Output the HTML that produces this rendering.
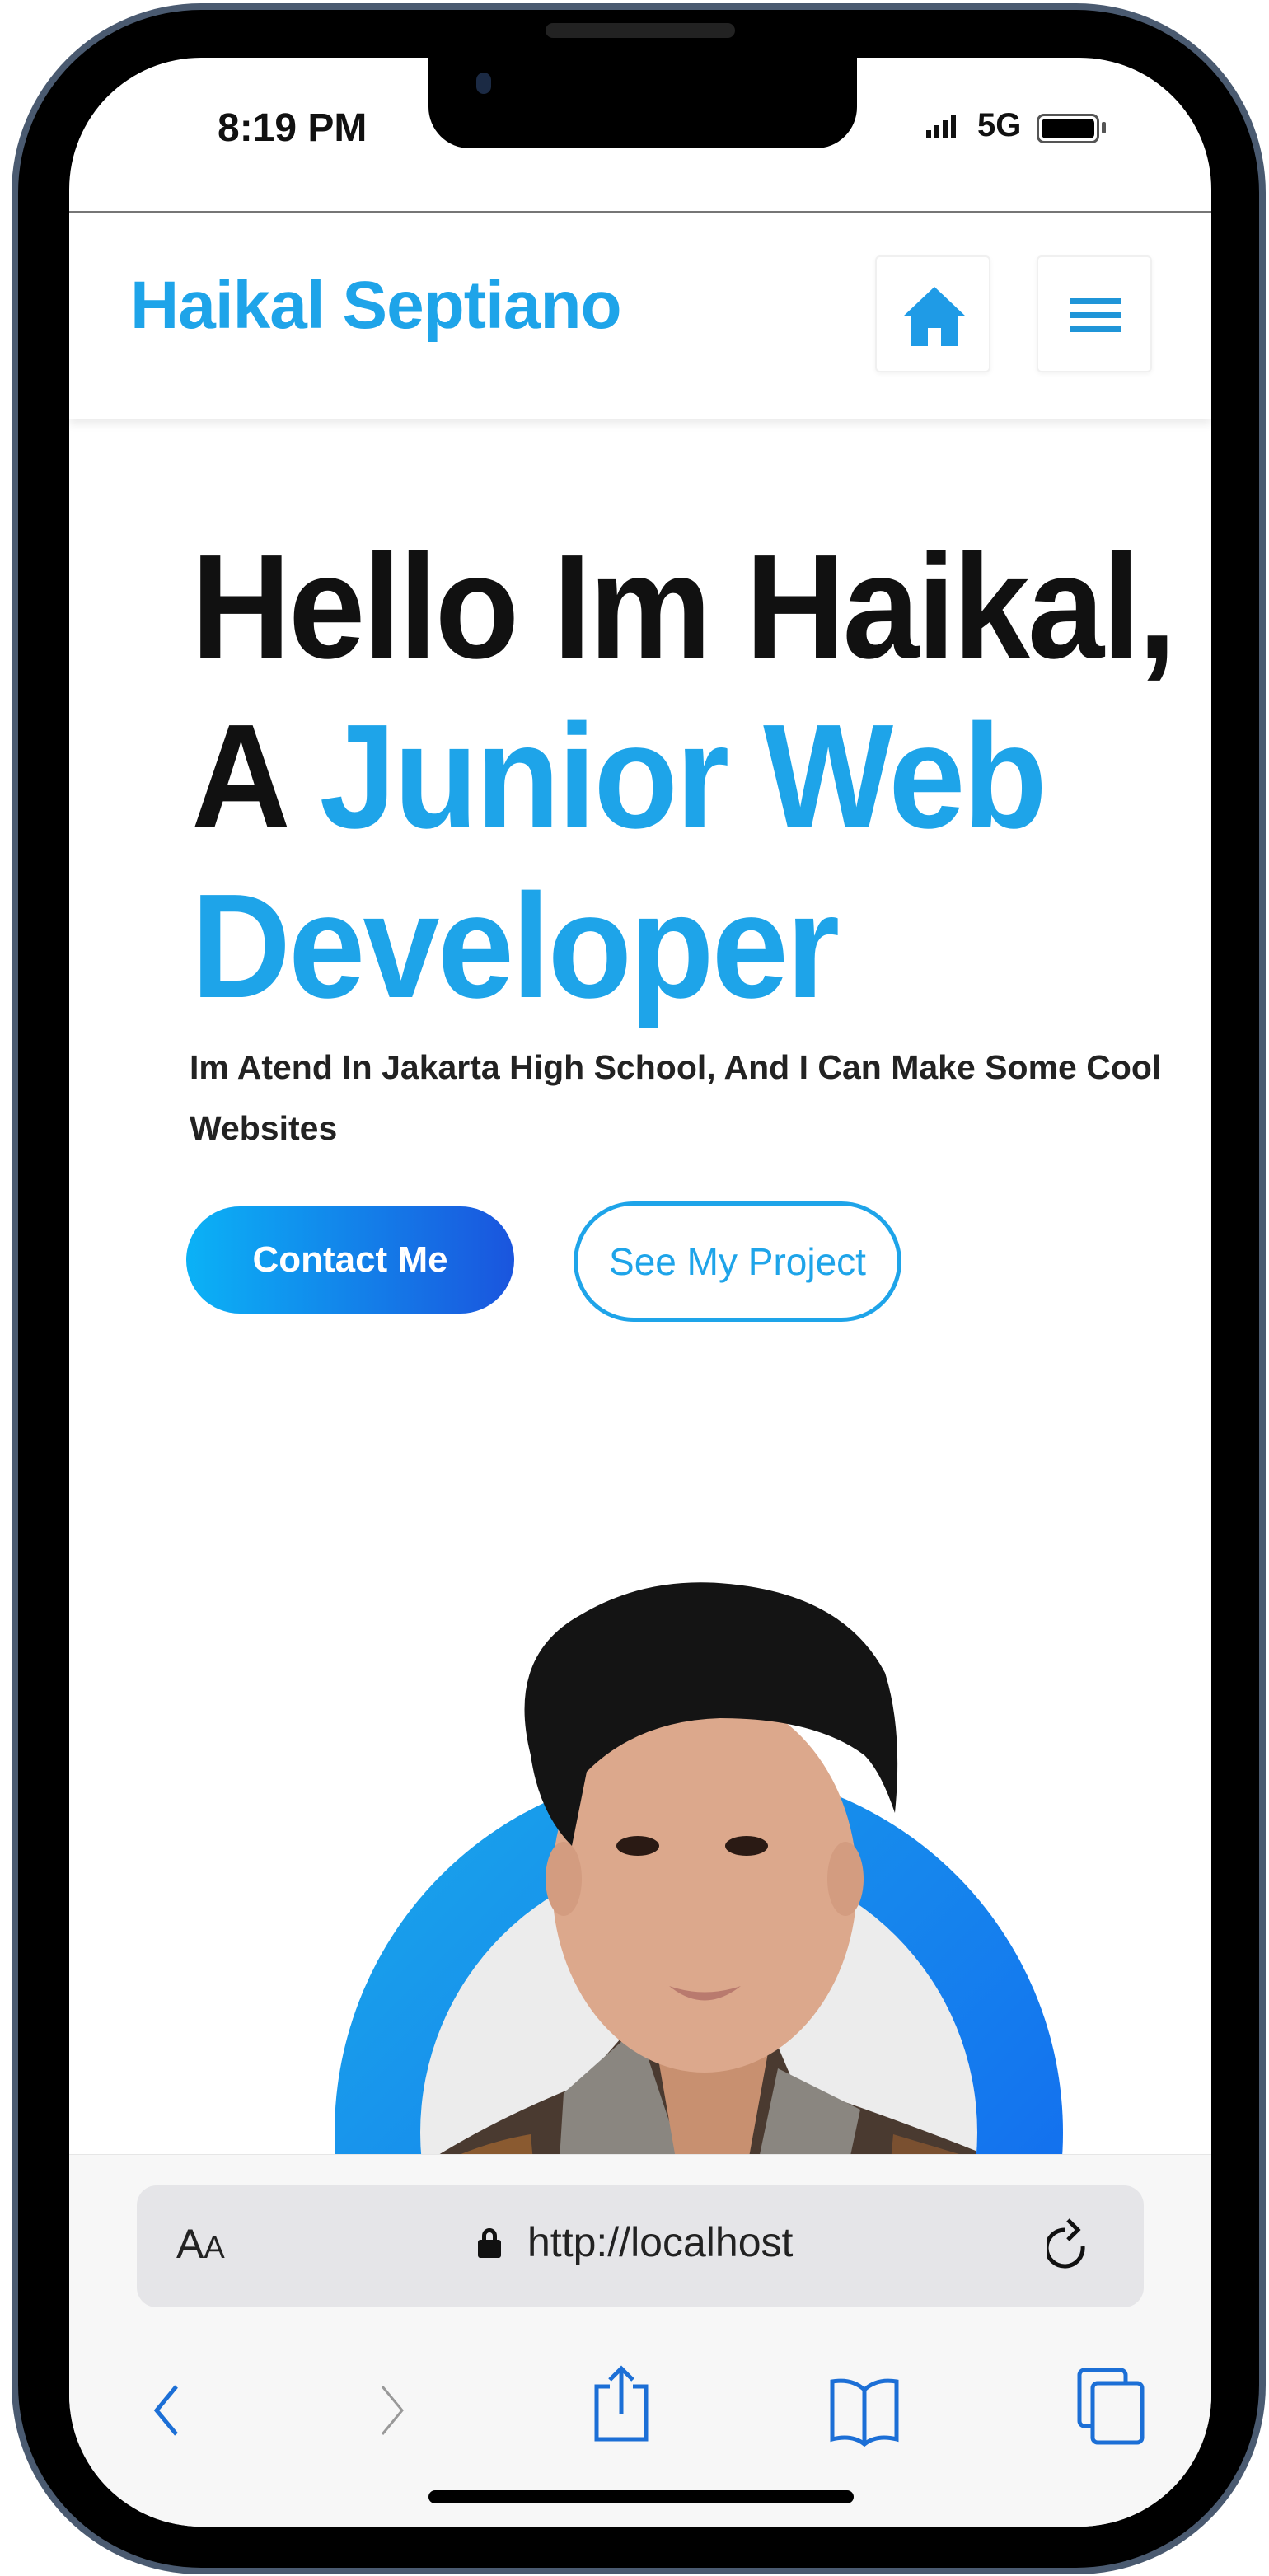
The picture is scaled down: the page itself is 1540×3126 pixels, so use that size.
<!DOCTYPE html>
<html><head><meta charset="utf-8"><style>
*{margin:0;padding:0;box-sizing:border-box}
body{width:1540px;height:3126px;background:#fff;position:relative;overflow:hidden;font-family:"Liberation Sans",sans-serif}
.a{position:absolute}
</style></head><body>
<div class="a" style="left:14px;top:4px;width:1522px;height:3120px;border-radius:230px;background:#4a5a70;"></div>
<div class="a" style="left:22px;top:12px;width:1506px;height:3104px;border-radius:222px;background:#000;"></div>
<div class="a" style="left:84px;top:70px;width:1386px;height:2996px;border-radius:160px;background:#fff;overflow:hidden;">
  <div class="a" style="left:0;top:186px;width:1386px;height:3px;background:#777"></div>
  <div class="a" style="left:0;top:189px;width:1386px;height:250px;background:#fff;box-shadow:0 6px 10px rgba(0,0,0,.08)"></div>
  <div class="a" style="left:74px;top:254px;font-size:82px;font-weight:bold;color:#1ea4e9;letter-spacing:-1px;white-space:nowrap">Haikal Septiano</div>
  <div class="a" style="left:978px;top:240px;width:140px;height:142px;border:2px solid #f0f0f0;border-radius:6px;box-shadow:0 2px 6px rgba(0,0,0,.05)">
    <svg class="a" style="left:28px;top:30px" width="84" height="84" viewBox="0 0 84 84"><path d="M42 6 L80 42 H70 V78 H50 V56 H34 V78 H14 V42 H4 Z" fill="#1f9be6"/></svg>
  </div>
  <div class="a" style="left:1174px;top:240px;width:140px;height:142px;border:2px solid #f0f0f0;border-radius:6px;box-shadow:0 2px 6px rgba(0,0,0,.05)">
    <div class="a" style="left:38px;top:50px;width:62px;height:7px;background:#1f95d8"></div>
    <div class="a" style="left:38px;top:67px;width:62px;height:7px;background:#1f95d8"></div>
    <div class="a" style="left:38px;top:84px;width:62px;height:7px;background:#1f95d8"></div>
  </div>
  <div class="a" style="left:148px;top:564px;font-size:180px;font-weight:bold;line-height:206px;color:#111;letter-spacing:-3px;white-space:nowrap;transform:scaleX(0.93);transform-origin:0 0">Hello Im Haikal,<br>A <span style="color:#1ea4e9">Junior Web</span><br><span style="color:#1ea4e9">Developer</span></div>
  <div class="a" style="left:146px;top:1188px;width:1260px;font-size:41px;line-height:74px;color:#222;font-weight:bold">Im Atend In Jakarta High School, And I Can Make Some Cool Websites</div>
  <div class="a" style="left:142px;top:1394px;width:398px;height:130px;border-radius:65px;background:linear-gradient(90deg,#0bb2f6,#1a55de);color:#fff;font-size:44px;font-weight:bold;text-align:center;line-height:130px">Contact Me</div>
  <div class="a" style="left:612px;top:1388px;width:398px;height:146px;border-radius:73px;border:5px solid #1ea4e9;color:#1ea4e9;font-size:46px;text-align:center;line-height:136px">See My Project</div>
  <svg class="a" style="left:0;top:1800px" width="1386" height="815" viewBox="0 1870 1386 815">
    <defs><linearGradient id="g" x1="0" y1="0" x2="1" y2="1"><stop offset="0" stop-color="#1aa8ea"/><stop offset="1" stop-color="#1160f0"/></linearGradient></defs>
    <circle cx="764" cy="2588" r="442" fill="url(#g)"/>
    <circle cx="764" cy="2588" r="338" fill="#ececec"/>
    <path d="M430 2700 L440 2620 Q520 2570 620 2530 L690 2450 L850 2460 L880 2530 Q1000 2570 1100 2610 L1110 2700 Z" fill="#4a3a30"/>
    <path d="M600 2540 L690 2460 L750 2640 L720 2700 L590 2700 Z" fill="#8a8680"/>
    <path d="M860 2510 L960 2560 L930 2700 L820 2700 Z" fill="#8a8680"/>
    <path d="M440 2630 Q500 2600 560 2590 L570 2700 L440 2700 Z" fill="#8a5a30"/>
    <path d="M1000 2590 L1100 2620 L1105 2700 L990 2700 Z" fill="#7a5030"/>
    <path d="M710 2470 L850 2480 L810 2700 L750 2700 Z" fill="#c89070"/>
    <ellipse cx="771" cy="2285" rx="185" ry="230" fill="#dca88c"/>
    <ellipse cx="600" cy="2280" rx="22" ry="45" fill="#d39c80"/>
    <ellipse cx="942" cy="2280" rx="22" ry="45" fill="#d39c80"/>
    <ellipse cx="690" cy="2240" rx="26" ry="12" fill="#2a1a14"/>
    <ellipse cx="822" cy="2240" rx="26" ry="12" fill="#2a1a14"/>
    <path d="M728 2410 Q771 2425 815 2410 Q771 2445 728 2410Z" fill="#b97a6e"/>
    <path d="M560 2130 Q530 2010 620 1960 Q700 1912 800 1922 Q940 1935 990 2030 Q1012 2100 1002 2200 Q985 2150 965 2130 Q905 2085 790 2085 Q690 2088 628 2150 L610 2240 Q570 2200 560 2130Z" fill="#141414"/>
  </svg>
  <div class="a" style="left:0;top:2544px;width:1386px;height:460px;background:#f7f7f7;border-top:1px solid #e6e6e6"></div>
  <div class="a" style="left:82px;top:2582px;width:1222px;height:148px;border-radius:24px;background:#e5e5e8"></div>
  <div class="a" style="left:130px;top:2624px;font-size:50px;color:#222">A<span style="font-size:38px">A</span></div>
  <div class="a" style="left:496px;top:2634px;width:28px;height:34px"><div style="position:absolute;left:5px;top:0;width:18px;height:20px;border:5px solid #111;border-radius:9px 9px 0 0"></div><div style="position:absolute;left:0;top:14px;width:28px;height:22px;background:#111;border-radius:3px"></div></div>
  <div class="a" style="left:556px;top:2622px;font-size:50px;color:#222">http://localhost</div>
  <svg class="a" style="left:1186px;top:2616px" width="60" height="80" viewBox="0 0 60 80"><path d="M22 20 A22 22 0 1 0 44 40" fill="none" stroke="#111" stroke-width="5"/><path d="M26 8 L38 20 L26 32" fill="none" stroke="#111" stroke-width="5"/></svg>
  <svg class="a" style="left:98px;top:2820px" width="40" height="70"><path d="M32 6 L8 35 L32 64" fill="none" stroke="#1c6fd6" stroke-width="5"/></svg>
  <svg class="a" style="left:372px;top:2820px" width="40" height="70"><path d="M8 6 L32 35 L8 64" fill="none" stroke="#999" stroke-width="3"/></svg>
  <svg class="a" style="left:632px;top:2800px" width="76" height="100"><path d="M24 26 H8 V90 H68 V26 H52" fill="none" stroke="#1c6fd6" stroke-width="5"/><path d="M38 4 V60 M24 18 L38 4 L52 18" fill="none" stroke="#1c6fd6" stroke-width="5"/></svg>
  <svg class="a" style="left:920px;top:2810px" width="90" height="90"><path d="M45 20 Q30 6 6 10 V80 Q30 74 45 86 Q60 74 84 80 V10 Q60 6 45 20 V86" fill="none" stroke="#1c6fd6" stroke-width="5"/></svg>
  <svg class="a" style="left:1220px;top:2800px" width="90" height="100"><rect x="6" y="6" width="56" height="68" rx="6" fill="none" stroke="#1c6fd6" stroke-width="5"/><rect x="22" y="22" width="60" height="72" rx="6" fill="#f7f7f7" stroke="#1c6fd6" stroke-width="5"/></svg>
  <div class="a" style="left:436px;top:2952px;width:516px;height:16px;border-radius:8px;background:#000"></div>
</div>
<div class="a" style="left:520px;top:60px;width:520px;height:120px;background:#000;border-radius:0 0 50px 50px"></div>
<div class="a" style="left:662px;top:28px;width:230px;height:18px;background:#222;border-radius:9px"></div>
<div class="a" style="left:578px;top:88px;width:18px;height:26px;border-radius:9px;background:#1b2a44"></div>
<div class="a" style="left:264px;top:128px;font-size:48px;font-weight:bold;color:#111">8:19 PM</div>
<div class="a" style="left:1124px;top:158px;width:6px;height:10px;background:#111"></div>
<div class="a" style="left:1134px;top:152px;width:6px;height:16px;background:#111"></div>
<div class="a" style="left:1144px;top:146px;width:6px;height:22px;background:#111"></div>
<div class="a" style="left:1154px;top:140px;width:6px;height:28px;background:#111"></div>
<div class="a" style="left:1186px;top:130px;font-size:40px;font-weight:bold;color:#111">5G</div>
<div class="a" style="left:1258px;top:138px;width:76px;height:36px;border:3px solid #555;border-radius:9px;padding:3px"><div style="width:100%;height:100%;background:#000;border-radius:5px"></div></div>
<div class="a" style="left:1337px;top:148px;width:5px;height:14px;background:#555;border-radius:2px"></div>
</body></html>
